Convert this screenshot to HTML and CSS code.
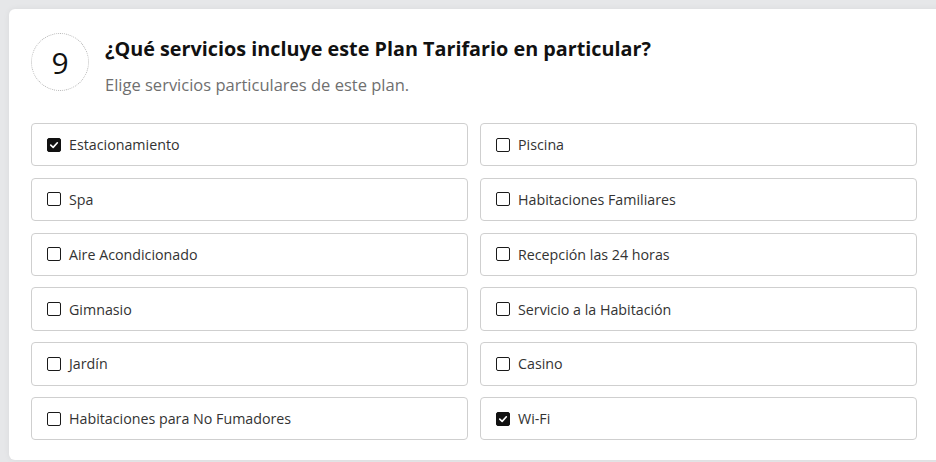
FILE: index.html
```html
<!DOCTYPE html>
<html lang="es">
<head>
<meta charset="utf-8">
<link rel="stylesheet" href="styles.css">
</head>
<body>
<div class="page">
  <section class="card">
    <header class="head">
      <div class="num">9</div>
      <div class="titles">
        <h2 class="title">¿Qué servicios incluye este Plan Tarifario en particular?</h2>
        <p class="sub">Elige servicios particulares de este plan.</p>
      </div>
    </header>
    <div class="grid">
      <label class="opt"><span class="box on"><svg viewBox="0 0 14 14" width="14" height="14"><path d="M3.2 7.2 L6 9.8 L10.9 4.4" fill="none" stroke="#fff" stroke-width="1.9" stroke-linecap="round" stroke-linejoin="round"/></svg></span>Estacionamiento</label>
      <label class="opt"><span class="box"></span>Piscina</label>
      <label class="opt"><span class="box"></span>Spa</label>
      <label class="opt"><span class="box"></span>Habitaciones Familiares</label>
      <label class="opt"><span class="box"></span>Aire Acondicionado</label>
      <label class="opt"><span class="box"></span>Recepción las 24 horas</label>
      <label class="opt"><span class="box"></span>Gimnasio</label>
      <label class="opt"><span class="box"></span>Servicio a la Habitación</label>
      <label class="opt"><span class="box"></span>Jardín</label>
      <label class="opt"><span class="box"></span>Casino</label>
      <label class="opt"><span class="box"></span>Habitaciones para No Fumadores</label>
      <label class="opt"><span class="box on"><svg viewBox="0 0 14 14" width="14" height="14"><path d="M3.2 7.2 L6 9.8 L10.9 4.4" fill="none" stroke="#fff" stroke-width="1.9" stroke-linecap="round" stroke-linejoin="round"/></svg></span>Wi-Fi</label>
    </div>
  </section>
</div>
</body>
</html>
```

FILE: styles.css
```css
* { box-sizing: border-box; }
html, body { margin: 0; padding: 0; }
body {
  background: #e6e7e9;
  font-family: "Open Sans", "Noto Sans", sans-serif;
  color: #333;
  width: 936px;
  height: 462px;
  overflow: hidden;
}
.page {
  padding: 9px 0 0 9px;
}
.card {
  background: #fff;
  border-radius: 6px 0 0 6px;
  width: 940px;
  padding: 23px 0 20px 22px;
  box-shadow: 0 0 6px rgba(0,0,0,0.06);
}
.head {
  display: flex;
  align-items: flex-start;
}
.num {
  width: 58px;
  height: 58px;
  border-radius: 50%;
  border: 1px dotted #b5b5b5;
  display: flex;
  align-items: center;
  justify-content: center;
  font-size: 30px;
  font-weight: 400;
  color: #111;
  flex: none;
  margin-top: 1px;
}
.titles {
  margin-left: 16px;
}
.title {
  margin: 5px 0 0 0;
  font-size: 19.8px;
  font-weight: 700;
  color: #111;
  line-height: 24px;
}
.sub {
  margin: 13px 0 0 0;
  font-size: 16.5px;
  color: #6f6f6f;
  line-height: 22px;
}
.grid {
  margin-top: 27px;
  display: grid;
  grid-template-columns: 437px 437px;
  grid-auto-rows: 43.4px;
  column-gap: 12px;
  row-gap: 11.4px;
}
.opt {
  border: 1px solid #cfcfcf;
  border-radius: 4px;
  display: flex;
  align-items: center;
  padding-left: 15px;
  font-size: 14.25px;
  color: #333;
}
.box {
  width: 14px;
  height: 14px;
  border: 1.7px solid #1a1a1a;
  border-radius: 2px;
  margin-right: 8px;
  flex: none;
  display: flex;
  align-items: center;
  justify-content: center;
}
.box.on {
  background: #111;
  border-color: #111;
}
.box svg { display: block; }
```
